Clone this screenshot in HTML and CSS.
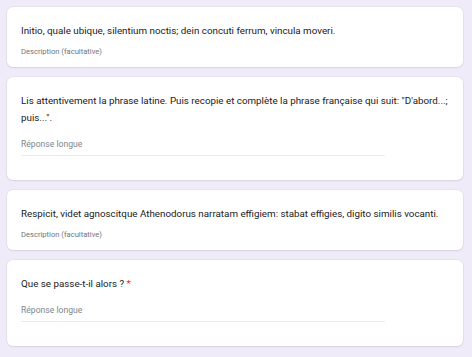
FILE: index.html
```html
<!DOCTYPE html>
<html lang="fr">
<head>
  <meta charset="UTF-8">
  <title>Formulaire</title>
  <link rel="stylesheet" href="styles.css">
</head>
<body>

<div id="formList">
  <div class="card">
    <div class="item-title">Initio, quale ubique, silentium noctis; dein concuti ferrum, vincula moveri.</div>
    <div class="item-desc">Description (facultative)</div>
  </div>

  <div class="card">
    <div class="item-title">Lis attentivement la phrase latine. Puis recopie et complète la phrase française qui suit: "D'abord...; puis...".</div>
    <div class="answer-line">Réponse longue</div>
  </div>

  <div class="card">
    <div class="item-title">Respicit, videt agnoscitque Athenodorus narratam effigiem: stabat effigies, digito similis vocanti.</div>
    <div class="item-desc">Description (facultative)</div>
  </div>

  <div class="card">
    <div class="item-title">Que se passe-t-il alors ? <span class="required">*</span></div>
    <div class="answer-line">Réponse longue</div>
  </div>
</div>

</body>
</html>
```

FILE: styles.css
```css
body { margin: 0; background-color: #f0ebf8; font-family: Roboto, "Liberation Sans", sans-serif; }
#formList { display: flex; flex-direction: column; gap: 10px; padding: 7px 9px 7px 7px; }
.card {
  background-color: #fff; border-radius: 6px; padding: 15px 14px 10px 14px;
  box-shadow: 0 0 0 1px rgba(0, 0, 0, 0.03), 0 1px 2px rgba(0, 0, 0, 0.08);
}
.item-title { font-size: 9.8px; line-height: 17px; color: #202124; }
.required { color: #d93025; }
.item-desc { margin-top: 7px; font-size: 7.6px; line-height: 11px; color: #70757a; }
.answer-line {
  width: 364px; margin: 10px 0 14px 0; padding-bottom: 3px;
  font-size: 8.6px; line-height: 16px; color: #80868b;
  border-bottom: 1px solid #ebebeb;
}
```
